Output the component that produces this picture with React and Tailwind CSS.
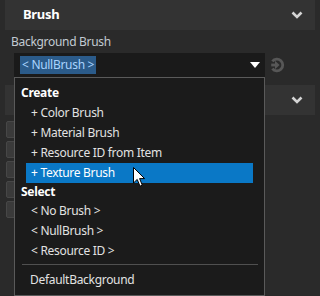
const CREATE = ['Color Brush', 'Material Brush', 'Resource ID from Item', 'Texture Brush'];
const SELECT = ['< No Brush >', '< NullBrush >', '< Resource ID >'];

function Chevron() {
    return (
        <svg width="12" height="8" viewBox="0 0 12 8">
            <path d="M1.5 1.5 L6 6 L10.5 1.5" fill="none" stroke="#d4d4d4" strokeWidth="2.6" />
        </svg>
    );
}

function ResetIcon() {
    return (
        <svg width="16" height="16" viewBox="0 0 16 16">
            <path d="M3.4 4.4 A5.8 5.8 0 1 1 3.4 11.6" fill="none" stroke="#575757" strokeWidth="2.8" />
            <path d="M2.2 8 H7" stroke="#575757" strokeWidth="2.8" />
            <polygon points="6,3.8 10.6,8 6,12.2" fill="#575757" />
        </svg>
    );
}

function Cursor() {
    return (
        <svg className="absolute left-[133px] top-[167px]" width="13" height="21" viewBox="0 0 13 21">
            <path
                d="M0.5 0.5 L0.5 16 L4.2 12.4 L7 19.2 L9.3 18.2 L6.6 11.6 L11.6 11.6 Z"
                fill="#fff"
                stroke="#000"
                strokeWidth="1"
                strokeLinejoin="round"
            />
        </svg>
    );
}

export default function App() {
    return (
        <div className="relative w-[320px] h-[296px] overflow-hidden bg-[#2a2a2a] font-['Noto_Sans',sans-serif] text-[12px] tracking-[-0.3px]">
            <div className="mx-[5px] h-[30px] bg-[#333333] flex items-center justify-between pl-[18px] pr-[12px]">
                <span className="font-bold text-[13px] text-white">Brush</span>
                <Chevron />
            </div>

            <div className="h-[23px] pl-[11px] pt-[4px] leading-[16px] text-[#c2cad2]">Background Brush</div>

            <div className="flex items-center pl-[14px]">
                <div className="w-[251px] h-[24px] bg-[#1a1a1a] flex items-center justify-between pl-[6px] pr-[5px]">
                    <span className="bg-[#2b5b8a] text-[#a9d4ff] px-[2px] h-[18px] leading-[18px]">&lt; NullBrush &gt;</span>
                    <svg width="10" height="6" viewBox="0 0 10 6">
                        <polygon points="0,0 10,0 5,6" fill="#fff" />
                    </svg>
                </div>
                <div className="ml-[4px]">
                    <ResetIcon />
                </div>
            </div>

            <div className="mt-[8px] mx-[5px] h-[30px] bg-[#333333] flex items-center justify-end pr-[12px]">
                <Chevron />
            </div>

            <div className="flex flex-col gap-[3px] pl-[6px] mt-[6px]">
                {[0, 1, 2, 3, 4].map((i) => (
                    <div key={i} className="w-[20px] h-[17px] rounded-[2px] border border-[#474747] bg-[#3a3a3a]" />
                ))}
            </div>

            <div className="absolute left-[14px] top-[77px] w-[251px] h-[219px] border border-[#5a5a5a] bg-[#1b1b1b] text-[#e2e2e2] pt-[5px]">
                <div className="h-[20px] flex items-center pl-[6px] font-bold text-white">Create</div>
                {CREATE.map((c) => (
                    <div
                        key={c}
                        className={
                            c === 'Texture Brush'
                                ? 'h-[20px] mx-[11px] pl-[5px] flex items-center bg-[#0a78c6] text-white'
                                : 'h-[20px] mx-[11px] pl-[5px] flex items-center'
                        }>
                        + {c}
                    </div>
                ))}
                <div className="h-[18px] flex items-center pl-[6px] font-bold text-white">Select</div>
                {SELECT.map((s) => (
                    <div key={s} className="h-[20px] mx-[11px] pl-[5px] flex items-center">
                        {s}
                    </div>
                ))}
                <div className="mt-[3px] ml-[7px] mr-[6px] h-px bg-[#505050]" />
                <div className="mt-[5px] h-[20px] pl-[15px] flex items-center">DefaultBackground</div>
            </div>

            <Cursor />
        </div>
    );
}
